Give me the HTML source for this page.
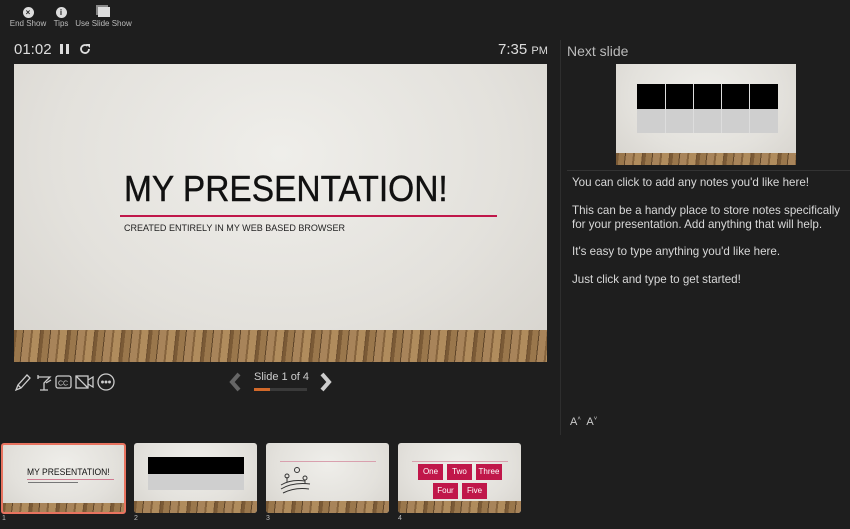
<!DOCTYPE html>
<html><head><style>
*{margin:0;padding:0;box-sizing:border-box}
body{width:850px;height:529px;background:#1e1e1e;font-family:"Liberation Sans",sans-serif;color:#ccc;position:relative;overflow:hidden}
.a{position:absolute;white-space:nowrap}
.wood{background:repeating-linear-gradient(96deg,#7a5a36 0 3px,#9a774c 3px 9px,#5e4429 9px 10px,#a8845a 10px 17px,#85633d 17px 19px,#b08c5d 19px 26px,#6d4f30 26px 27px);}
.slide{background:radial-gradient(ellipse at 50% 30%,#efeeea,#e3e1dc 60%,#d6d3cd);}
.tb{font-size:8px;color:#bbb;text-align:center}
.ic{width:11px;height:11px;border-radius:50%;background:#ddd;margin:0 auto 1px;color:#222;font-size:8px;line-height:11px;font-weight:bold}
.note{font-size:11.6px;color:#d8d8d8;line-height:14px}
.red{background:#c0174a;color:#fff;font-size:8px;text-align:center;line-height:16px;height:16px}
</style></head><body>
<div class="a tb" style="left:8px;top:7px;width:40px"><div class="ic">×</div>End Show</div>
<div class="a tb" style="left:51px;top:7px;width:20px"><div class="ic">i</div>Tips</div>
<div class="a tb" style="left:75px;top:7px;width:57px"><div style="width:12px;height:10px;border:1.5px solid #ddd;background:#ddd;margin:0 auto 2px;box-shadow:-2px -2px 0 #888"></div>Use Slide Show</div>

<div class="a" style="left:14px;top:41px;font-size:15px;color:#ddd">01:02</div>
<div class="a" style="left:60px;top:44px;width:3px;height:10px;background:#ddd"></div>
<div class="a" style="left:66px;top:44px;width:3px;height:10px;background:#ddd"></div>
<svg class="a" style="left:79px;top:43px" width="12" height="12" viewBox="0 0 12 12"><path d="M10 6a4 4 0 1 1-1.5-3.1" fill="none" stroke="#ddd" stroke-width="1.8"/><path d="M7 1h4v4z" fill="#ddd"/></svg>
<div class="a" style="left:498px;top:41px;font-size:15px;color:#ddd">7:35 <span style="font-size:11px">PM</span></div>

<div class="a slide" style="left:14px;top:64px;width:533px;height:298px;overflow:hidden">
 <div class="a wood" style="left:0;top:266px;width:533px;height:32px"></div>
 <div class="a" style="left:110px;top:104px;font-size:36px;color:#111;-webkit-text-stroke:0.4px #111;transform:scaleX(0.93);transform-origin:left">MY PRESENTATION!</div>
 <div class="a" style="left:106px;top:151px;width:377px;height:2px;background:#c0174a"></div>
 <div class="a" style="left:110px;top:159px;font-size:9.5px;color:#222;transform:scaleX(0.95);transform-origin:left">CREATED ENTIRELY IN MY WEB BASED BROWSER</div>
</div>

<svg class="a" style="left:14px;top:372px" width="104" height="20" viewBox="0 0 104 20" fill="none" stroke="#ccc" stroke-width="1.3">
<path d="M2 18l2-5 9-10 3 3-9 10z M4 13l3 3"/>
<path d="M24 5h12l-6 6v7M26 18h8M24 3v4M37 8l-5 3"/>
<rect x="42" y="4" width="15" height="12" rx="2"/><text x="44" y="13.5" font-size="7" fill="#ccc" stroke="none" font-family="Liberation Sans">CC</text>
<rect x="62" y="4" width="12" height="12"/><path d="M74 8l5-3v10l-5-3M62 4l12 12"/>
<circle cx="92" cy="10" r="8"/><circle cx="88.5" cy="10" r=".8" fill="#ccc"/><circle cx="92" cy="10" r=".8" fill="#ccc"/><circle cx="95.5" cy="10" r=".8" fill="#ccc"/>
</svg>
<svg class="a" style="left:228px;top:372px" width="14" height="20"><path d="M11 2L4 10l7 8" fill="none" stroke="#666" stroke-width="4"/></svg>
<div class="a" style="left:254px;top:371px;font-size:11px;color:#ccc">Slide 1 of 4</div>
<div class="a" style="left:254px;top:388px;width:53px;height:3px;background:#3a3a3a"><div style="width:16px;height:3px;background:#d2692a"></div></div>
<svg class="a" style="left:319px;top:372px" width="14" height="20"><path d="M3 2l7 8-7 8" fill="none" stroke="#ccc" stroke-width="4"/></svg>

<div class="a" style="left:560px;top:40px;width:1px;height:395px;background:#2e2e2e"></div>
<div class="a" style="left:567px;top:43px;font-size:14px;color:#bbb">Next slide</div>
<div class="a slide" style="left:616px;top:64px;width:180px;height:101px;overflow:hidden">
 <div class="a wood" style="left:0;top:89px;width:180px;height:12px"></div>
 <div class="a" style="left:21px;top:20px;width:141px;height:25px;background:#000"></div>
 <div class="a" style="left:21px;top:45px;width:141px;height:24px;background:#cfcfcf"></div>
 <div class="a" style="left:49px;top:20px;width:1px;height:49px;background:#ddd"></div>
 <div class="a" style="left:77px;top:20px;width:1px;height:49px;background:#ddd"></div>
 <div class="a" style="left:105px;top:20px;width:1px;height:49px;background:#ddd"></div>
 <div class="a" style="left:133px;top:20px;width:1px;height:49px;background:#ddd"></div>
</div>
<div class="a" style="left:567px;top:170px;width:283px;height:1px;background:#333"></div>
<div class="a note" style="left:572px;top:176px">You can click to add any notes you'd like here!</div>
<div class="a note" style="left:572px;top:204px">This can be a handy place to store notes specifically<br>for your presentation. Add anything that will help.</div>
<div class="a note" style="left:572px;top:245px">It's easy to type anything you'd like here.</div>
<div class="a note" style="left:572px;top:273px">Just click and type to get started!</div>
<div class="a" style="left:570px;top:416px;font-size:11px;color:#ccc">A<sup style="font-size:6px">˄</sup>&nbsp; A<sup style="font-size:6px">˅</sup></div>

<div class="a slide" style="left:1px;top:443px;width:125px;height:71px;border:2px solid #e8735f;border-radius:3px;overflow:hidden">
 <div class="a wood" style="left:0;top:58px;width:125px;height:13px"></div>
 <div class="a" style="left:24px;top:22px;font-size:9px;color:#111;transform:scaleX(.95);transform-origin:left">MY PRESENTATION!</div>
 <div class="a" style="left:24px;top:34px;width:87px;height:1px;background:#d07a90"></div>
 <div class="a" style="left:25px;top:37px;width:50px;height:1px;background:#777"></div>
</div>
<div class="a slide" style="left:134px;top:443px;width:123px;height:70px;border-radius:3px;overflow:hidden">
 <div class="a wood" style="left:0;top:58px;width:123px;height:12px"></div>
 <div class="a" style="left:14px;top:14px;width:96px;height:17px;background:#000"></div>
 <div class="a" style="left:14px;top:31px;width:96px;height:16px;background:#cfcfcf"></div>
</div>
<div class="a slide" style="left:266px;top:443px;width:123px;height:70px;border-radius:3px;overflow:hidden">
 <div class="a wood" style="left:0;top:58px;width:123px;height:12px"></div>
 <div class="a" style="left:14px;top:18px;width:96px;height:1px;background:#d9a0ae"></div>
 <svg class="a" style="left:14px;top:22px" width="34" height="30" fill="none" stroke="#333" stroke-width="1"><circle cx="17" cy="5" r="2.5"/><path d="M1 20q10-6 24-4M1 24q12-7 29-5M3 28q12-6 26-4M7 12v5M25 15v4"/><circle cx="7" cy="11" r="2"/><circle cx="25" cy="13" r="2"/></svg>
</div>
<div class="a slide" style="left:398px;top:443px;width:123px;height:70px;border-radius:3px;overflow:hidden">
 <div class="a wood" style="left:0;top:58px;width:123px;height:12px"></div>
 <div class="a" style="left:14px;top:18px;width:96px;height:1px;background:#d9a0ae"></div>
 <div class="a red" style="left:20px;top:21px;width:25px">One</div>
 <div class="a red" style="left:49px;top:21px;width:25px">Two</div>
 <div class="a red" style="left:78px;top:21px;width:26px">Three</div>
 <div class="a red" style="left:35px;top:40px;width:25px">Four</div>
 <div class="a red" style="left:64px;top:40px;width:25px">Five</div>
</div>
<div class="a" style="left:2px;top:515px;font-size:7px;color:#bbb">1</div>
<div class="a" style="left:134px;top:515px;font-size:7px;color:#bbb">2</div>
<div class="a" style="left:266px;top:515px;font-size:7px;color:#bbb">3</div>
<div class="a" style="left:398px;top:515px;font-size:7px;color:#bbb">4</div>
</body></html>
